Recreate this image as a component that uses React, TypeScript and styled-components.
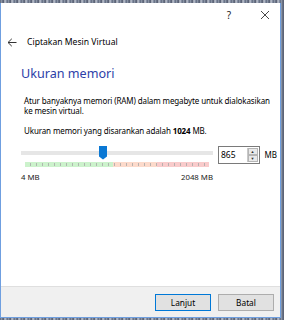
import React from 'react'
import styled, { createGlobalStyle } from 'styled-components'

const GlobalStyle = createGlobalStyle`
    html, body {
        margin: 0;
        padding: 0;
    }
    body {
        font-family: 'Noto Sans', 'Liberation Sans', sans-serif;
        color: #000;
    }
`

const Desktop = styled.div`
    width: 284px;
    height: 320px;
    overflow: hidden;
    background: repeating-linear-gradient(
        90deg,
        #5a6478 0px,
        #9aa4b4 2px,
        #3a4258 3px,
        #c4cad4 5px,
        #6e7890 7px
    );
    padding-top: 3px;
    box-sizing: border-box;
`

const Window = styled.div`
    width: 281px;
    height: 315px;
    box-sizing: border-box;
    border: 1px solid #6f9fe0;
    border-top: none;
    background: #fff;
    display: flex;
    flex-direction: column;
`

const TitleBar = styled.div`
    height: 24px;
    display: flex;
    justify-content: flex-end;
    align-items: center;
    padding-right: 10px;
    gap: 24px;
`

const TitleButton = styled.span`
    font-size: 10px;
    color: #222;
    width: 14px;
    text-align: center;
`

const Header = styled.div`
    display: flex;
    align-items: center;
    height: 20px;
    margin-top: 5px;
    padding-left: 6px;
    gap: 10px;
    font-size: 8.6px;
`

const Heading = styled.div`
    margin: 14px 0 0 20px;
    font-size: 12.6px;
    color: #2c3ea8;
    line-height: 16px;
`

const Body = styled.div`
    padding: 0 3px 0 23px;
    font-size: 8px;
    line-height: 10px;
    letter-spacing: -0.12px;
`

const Paragraph = styled.p<{ $top: number }>`
    margin: ${(p) => p.$top}px 0 0;
`

const SliderRow = styled.div`
    display: flex;
    align-items: flex-start;
    margin-top: 10px;
    margin-left: -3px;
    letter-spacing: 0;
`

const SliderColumn = styled.div`
    width: 192px;
    display: flex;
    flex-direction: column;
`

const TrackArea = styled.div`
    position: relative;
    height: 15px;
`

const Track = styled.div`
    margin-top: 5px;
    height: 4px;
    background: #e6e6e6;
`

const Thumb = styled.svg`
    position: absolute;
    top: 0;
`

const Scale = styled.div`
    margin: 1px 4px 0;
    height: 5px;
    display: flex;
    position: relative;
`

const Zone = styled.div<{ $w: number; $c: string }>`
    width: ${(p) => p.$w}px;
    background: ${(p) => p.$c};
`

const Ticks = styled.div`
    position: absolute;
    inset: 0;
    background: repeating-linear-gradient(
        90deg,
        transparent 0px,
        transparent 5px,
        #a8a8a8 5px,
        #a8a8a8 6px
    );
    clip-path: inset(1px 0 1px 0);
    opacity: 0.8;
`

const Labels = styled.div`
    display: flex;
    justify-content: space-between;
    margin-top: 5px;
    font-size: 7.8px;
    color: #222;
`

const SpinBox = styled.div`
    margin-left: 5px;
    width: 42px;
    height: 18px;
    box-sizing: border-box;
    border: 1px solid #7a7a7a;
    display: flex;
    align-items: stretch;
    font-size: 8.5px;
`

const SpinValue = styled.div`
    flex: 1;
    padding-left: 2px;
    display: flex;
    align-items: center;
`

const SpinButtons = styled.div`
    width: 10px;
    display: flex;
    flex-direction: column;
    border-left: 1px solid #c8c8c8;
    margin: 1px 1px 1px 0;
`

const SpinButton = styled.div`
    flex: 1;
    background: #e9e9e9;
    border: 1px solid #b5b5b5;
    display: flex;
    align-items: center;
    justify-content: center;
    font-size: 4px;
    color: #333;
    line-height: 1;
`

const Unit = styled.span`
    margin: 4px 0 0 5px;
    font-size: 8px;
`

const Spacer = styled.div`
    flex: 1;
`

const Footer = styled.div`
    height: 31px;
    background: #f0f0f0;
    border-top: 1px solid #dfdfdf;
    display: flex;
    justify-content: flex-end;
    align-items: flex-start;
    padding: 7px 6px 0 0;
    gap: 7px;
    box-sizing: border-box;
`

const Button = styled.button<{ $focused?: boolean }>`
    width: 56px;
    height: 17px;
    box-sizing: border-box;
    background: #e1e1e1;
    border: 1px solid ${(p) => (p.$focused ? '#0078d7' : '#adadad')};
    font-family: inherit;
    font-size: 8.3px;
    padding: 0;
    color: #000;
`

export default function App() {
    const scale = [
        { w: 88, c: '#ccf2cc' },
        { w: 44, c: '#fcdacb' },
        { w: 52, c: '#f9cbcb' },
    ]
    return (
        <>
            <GlobalStyle />
            <Desktop>
                <Window>
                    <TitleBar>
                        <TitleButton>?</TitleButton>
                        <svg width="10" height="10" viewBox="0 0 10 10">
                            <path d="M1 1L9 9M9 1L1 9" stroke="#333" strokeWidth="0.9" />
                        </svg>
                    </TitleBar>
                    <Header>
                        <svg width="10" height="9" viewBox="0 0 10 9">
                            <path d="M9.5 4.5H1M4.8 0.8L1 4.5L4.8 8.2" stroke="#333" strokeWidth="1" fill="none" />
                        </svg>
                        <span>Ciptakan Mesin Virtual</span>
                    </Header>
                    <Heading>Ukuran memori</Heading>
                    <Body>
                        <Paragraph $top={14}>
                            Atur banyaknya memori (RAM) dalam megabyte untuk dialokasikan ke mesin virtual.
                        </Paragraph>
                        <Paragraph $top={10}>
                            Ukuran memori yang disarankan adalah <b>1024</b> MB.
                        </Paragraph>
                        <SliderRow>
                            <SliderColumn>
                                <TrackArea>
                                    <Track />
                                    <Thumb width="10" height="14" viewBox="0 0 10 14" style={{ left: 77 }}>
                                        <path d="M1 0H9V10.5L5 13.5L1 10.5Z" fill="#0a78d4" />
                                    </Thumb>
                                </TrackArea>
                                <Scale>
                                    {scale.map((z, i) => (
                                        <Zone key={i} $w={z.w} $c={z.c} />
                                    ))}
                                    <Ticks />
                                </Scale>
                                <Labels>
                                    <span>4 MB</span>
                                    <span>2048 MB</span>
                                </Labels>
                            </SliderColumn>
                            <SpinBox>
                                <SpinValue>865</SpinValue>
                                <SpinButtons>
                                    <SpinButton>▲</SpinButton>
                                    <SpinButton>▼</SpinButton>
                                </SpinButtons>
                            </SpinBox>
                            <Unit>MB</Unit>
                        </SliderRow>
                    </Body>
                    <Spacer />
                    <Footer>
                        <Button $focused>Lanjut</Button>
                        <Button>Batal</Button>
                    </Footer>
                </Window>
            </Desktop>
        </>
    )
}
